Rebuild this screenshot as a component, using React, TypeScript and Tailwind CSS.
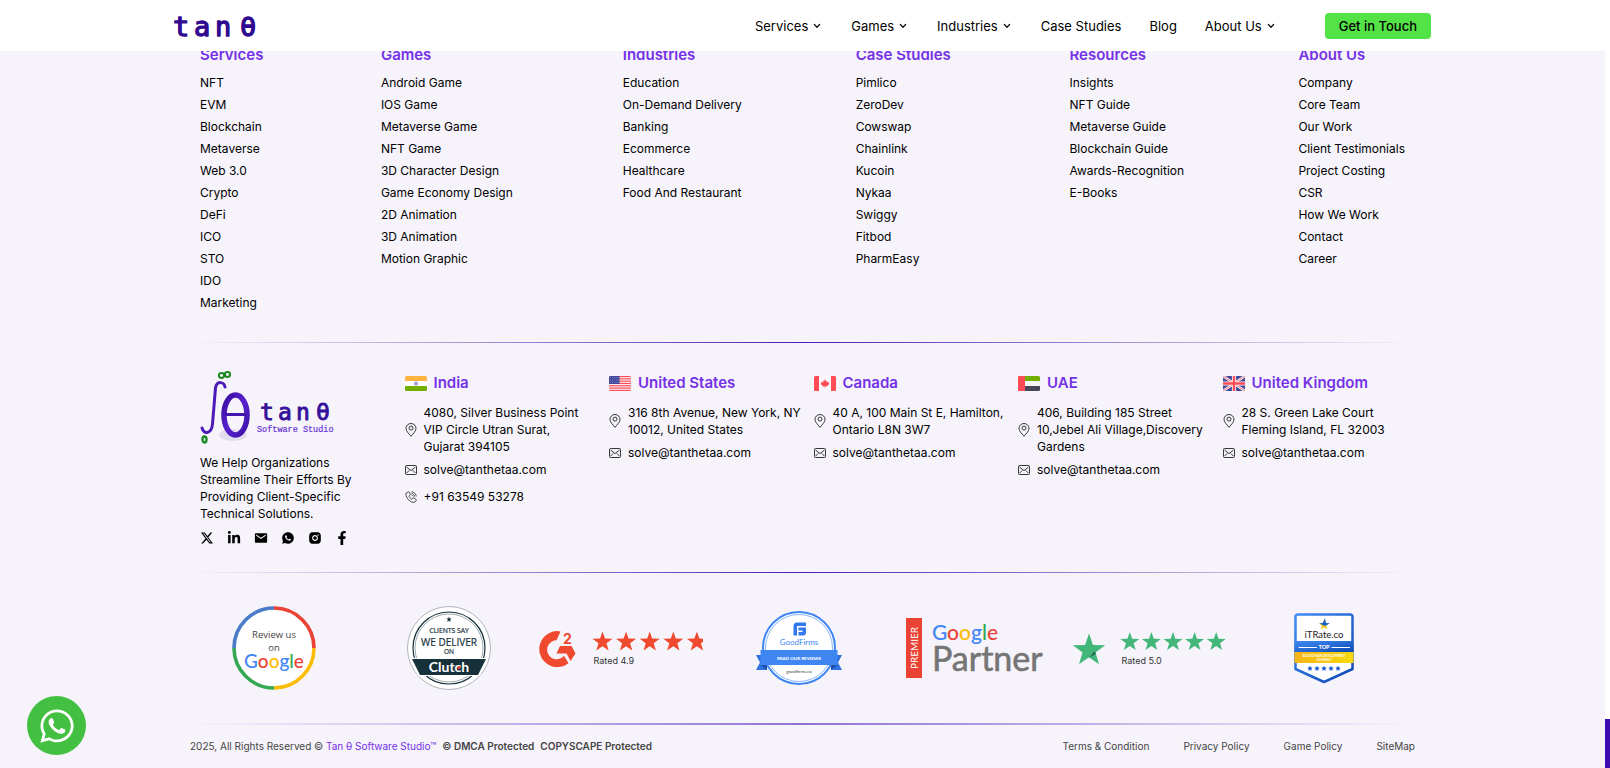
import type { ReactNode } from "react";
import { BsTwitterX } from "react-icons/bs";
import { FaFacebookF, FaLinkedinIn, FaWhatsapp } from "react-icons/fa";
import { IoMdMail } from "react-icons/io";
import { RiInstagramFill, RiWhatsappFill } from "react-icons/ri";

const navItems = [
  { label: "Services", menu: true },
  { label: "Games", menu: true },
  { label: "Industries", menu: true },
  { label: "Case Studies", menu: false },
  { label: "Blog", menu: false },
  { label: "About Us", menu: true },
];

const linkColumns = [
  {
    title: "Services",
    links: ["NFT", "EVM", "Blockchain", "Metaverse", "Web 3.0", "Crypto", "DeFi", "ICO", "STO", "IDO", "Marketing"],
  },
  {
    title: "Games",
    links: [
      "Android Game",
      "IOS Game",
      "Metaverse Game",
      "NFT Game",
      "3D Character Design",
      "Game Economy Design",
      "2D Animation",
      "3D Animation",
      "Motion Graphic",
    ],
  },
  {
    title: "Industries",
    links: ["Education", "On-Demand Delivery", "Banking", "Ecommerce", "Healthcare", "Food And Restaurant"],
  },
  {
    title: "Case Studies",
    links: ["Pimlico", "ZeroDev", "Cowswap", "Chainlink", "Kucoin", "Nykaa", "Swiggy", "Fitbod", "PharmEasy"],
  },
  {
    title: "Resources",
    links: ["Insights", "NFT Guide", "Metaverse Guide", "Blockchain Guide", "Awards-Recognition", "E-Books"],
  },
  {
    title: "About Us",
    links: [
      "Company",
      "Core Team",
      "Our Work",
      "Client Testimonials",
      "Project Costing",
      "CSR",
      "How We Work",
      "Contact",
      "Career",
    ],
  },
];

function starPoints(cx: number, cy: number, r: number, inner = 0.4) {
  return Array.from({ length: 10 }, (_, i) => {
    const radius = i % 2 === 0 ? r : r * inner;
    const angle = (Math.PI / 5) * i - Math.PI / 2;
    return `${(cx + radius * Math.cos(angle)).toFixed(2)},${(cy + radius * Math.sin(angle)).toFixed(2)}`;
  }).join(" ");
}

function ChevronIcon() {
  return (
    <svg viewBox="0 0 12 6" className="h-[6px] w-3" fill="none" stroke="#111" strokeWidth="1.3" strokeLinecap="round" aria-hidden="true">
      <path d="M3.400 1.500 6 4.200 8.600 1.500" />
    </svg>
  );
}

function PinIcon() {
  return (
    <svg viewBox="0 0 12 14" className="h-[14px] w-3 shrink-0" fill="none" stroke="#222" strokeWidth="0.9" aria-hidden="true">
      <path d="M6 13.3C3.8 10.6 1 8.100 1 5.400a5 4.900 0 0 1 10 0C11 8.100 8.200 10.600 6 13.300Z" />
      <circle cx="6" cy="5.100" r="2" />
    </svg>
  );
}

function EnvelopeIcon() {
  return (
    <svg viewBox="0 0 12 10" className="h-[10px] w-3 shrink-0" fill="none" stroke="#222" strokeWidth="0.9" aria-hidden="true">
      <rect x="0.500" y="0.500" width="11" height="9" rx="1" />
      <path d="M1.500 2 6 5.600 10.500 2M1.500 8.200 4.200 5.400M10.500 8.200 7.800 5.400" />
    </svg>
  );
}

function PhoneIcon() {
  return (
    <svg viewBox="0 0 24 24" className="h-3 w-3 shrink-0" fill="none" stroke="#222" strokeWidth="1.600" aria-hidden="true">
      <path d="M6.500 1.800 2.500 4C.5 6 2 12 6.500 17s10.500 7 13.500 5l2.500-3c.6-1 .2-1.800-.6-2.400l-4-2.600c-.9-.5-1.700-.3-2.300.5l-1 1.400c-.5.6-1 .7-1.700.2-2-1.300-3.500-3-4.600-5-.4-.7-.3-1.200.3-1.700l1.300-1c.7-.6.9-1.300.5-2.100L8.600 2.400c-.5-.8-1.200-1.100-2.100-.6Z" />
      <path d="M13 1.500c5 .2 9.300 4.500 9.500 9.500M13 4.800c3.300.2 6 2.900 6.200 6.200M13 8c1.600.2 2.800 1.400 3 3" />
    </svg>
  );
}

function Flag({ clip, label, children }: { clip: string; label: string; children: ReactNode }) {
  return (
    <svg viewBox="0 0 22 15" className="h-[15px] w-[22px] shrink-0" role="img" aria-label={label}>
      <clipPath id={clip}>
        <rect width="22" height="15" rx="1.500" />
      </clipPath>
      <g clipPath={`url(#${clip})`}>{children}</g>
    </svg>
  );
}

const flags: Record<string, ReactNode> = {
  India: (
    <Flag clip="flag-in" label="Flag of India">
      <rect width="22" height="15" fill="#fff" />
      <rect width="22" height="5" fill="#ffb341" />
      <rect y="10" width="22" height="5" fill="#73af00" />
      <circle cx="11" cy="7.500" r="1.700" fill="#dcdcf0" stroke="#5b5b9e" strokeWidth="0.500" />
      <path d="M10 6.500 12 8.500M12 6.500 10 8.500" stroke="#41479b" strokeWidth="0.500" />
    </Flag>
  ),
  "United States": (
    <Flag clip="flag-us" label="Flag of the United States">
      <rect width="22" height="15" fill="#f6f0f4" />
      {[0, 1, 2, 3, 4, 5, 6].map((i) => (
        <rect key={i} y={i * 2.3} width="22" height="1.150" fill="#ff4b55" />
      ))}
      <rect width="10.500" height="8" fill="#41479b" />
      {[1.6, 4, 6.4].map((y) =>
        [1.5, 3.4, 5.3, 7.2, 9.1].map((x) => <circle key={`${x}-${y}`} cx={x} cy={y} r="0.450" fill="#c9cbe8" />)
      )}
    </Flag>
  ),
  Canada: (
    <Flag clip="flag-ca" label="Flag of Canada">
      <rect width="22" height="15" fill="#f8f6fa" />
      <rect width="5" height="15" fill="#ff4b55" />
      <rect x="17" width="5" height="15" fill="#ff4b55" />
      <path
        d="M11 3.200l.9 1.700.9-.5-.3 2.200 1.200-1 .3.800 1.300-.2-.5 1.300.6.500-2.100 1.700.2.900-2.200-.3.050 1.500h-.7l.05-1.500-2.200.3.200-.9-2.100-1.700.6-.5-.5-1.300 1.300.2.300-.8 1.200 1-.3-2.200.9.500z"
        fill="#ff4b55"
      />
    </Flag>
  ),
  UAE: (
    <Flag clip="flag-ae" label="Flag of the UAE">
      <rect width="22" height="15" fill="#f5f5f5" />
      <rect width="22" height="5" fill="#73af00" />
      <rect y="10" width="22" height="5" fill="#464655" />
      <rect width="7" height="15" fill="#ff4b55" />
    </Flag>
  ),
  "United Kingdom": (
    <Flag clip="flag-gb" label="Flag of the United Kingdom">
      <rect width="22" height="15" fill="#41479b" />
      <path d="M0 0 22 15M22 0 0 15" stroke="#f5f5f5" strokeWidth="2.600" />
      <path d="M0 0 22 15M22 0 0 15" stroke="#ff4b55" strokeWidth="0.800" />
      <path d="M11 0V15M0 7.500H22" stroke="#f5f5f5" strokeWidth="4.200" />
      <path d="M11 0V15M0 7.500H22" stroke="#ff4b55" strokeWidth="2.400" />
    </Flag>
  ),
};

const offices = [
  {
    country: "India",
    address: ["4080, Silver Business Point", "VIP Circle Utran Surat,", "Gujarat 394105"],
    phone: "+91 63549 53278",
  },
  { country: "United States", address: ["316 8th Avenue, New York, NY", "10012, United States"] },
  { country: "Canada", address: ["40 A, 100 Main St E, Hamilton,", "Ontario L8N 3W7"] },
  { country: "UAE", address: ["406, Building 185 Street", "10,Jebel Ali Village,Discovery", "Gardens"] },
  { country: "United Kingdom", address: ["28 S. Green Lake Court", "Fleming Island, FL 32003"] },
];

const social = [
  { label: "X", icon: <BsTwitterX size={12} /> },
  { label: "LinkedIn", icon: <FaLinkedinIn size={14} /> },
  { label: "Email", icon: <IoMdMail size={14} /> },
  { label: "WhatsApp", icon: <RiWhatsappFill size={14} /> },
  { label: "Instagram", icon: <RiInstagramFill size={14} /> },
  { label: "Facebook", icon: <FaFacebookF size={14} /> },
];

function HeaderLogo() {
  return (
    <svg viewBox="0 0 86 40" className="h-10 w-[86px]" role="img" aria-label="tan θ">
      <g
        fill="#2f0a8f"
        stroke="#2f0a8f"
        strokeWidth="1.300"
        strokeLinejoin="round"
        fontFamily="'DejaVu Sans Mono', monospace"
        fontSize="27"
      >
        <text x="-1" y="30">t</text>
        <text x="20" y="30">a</text>
        <text x="41" y="30">n</text>
        <text x="66" y="30">θ</text>
      </g>
    </svg>
  );
}

function StudioLogo() {
  return (
    <svg viewBox="0 0 136 75" className="h-[75px] w-[136px]" role="img" aria-label="tan θ Software Studio">
      <defs>
        <linearGradient id="theta" x1="0" y1="0" x2="1" y2="1">
          <stop offset="0" stopColor="#3a0ca3" />
          <stop offset="0.500" stopColor="#5a22cc" />
          <stop offset="1" stopColor="#3d12a8" />
        </linearGradient>
      </defs>
      <ellipse cx="33" cy="64" rx="14" ry="6" fill="#e3deee" />
      <path
        d="M25 16C24 11 17 9 15.500 17L12.500 53C11.500 63 4 64 2 57"
        fill="none"
        stroke="#4a1bb8"
        strokeWidth="3"
        strokeLinecap="round"
      />
      <g fill="none" stroke="#1c8a22" strokeWidth="2">
        <ellipse cx="21.500" cy="4.500" rx="2.600" ry="2.400" />
        <ellipse cx="27.500" cy="3.500" rx="2.600" ry="2.400" />
        <ellipse cx="4.500" cy="68.500" rx="2" ry="3" strokeWidth="2.400" />
      </g>
      <ellipse cx="35.500" cy="44" rx="11.500" ry="20" fill="none" stroke="url(#theta)" strokeWidth="5.500" />
      <path d="M25 43.500H46" stroke="#4315b0" strokeWidth="3" />
      <g
        fill="#35109a"
        stroke="#35109a"
        strokeWidth="0.900"
        strokeLinejoin="round"
        fontFamily="'DejaVu Sans Mono', monospace"
        fontSize="23"
      >
        <text x="60" y="49">t</text>
        <text x="78" y="49">a</text>
        <text x="96" y="49">n</text>
        <text x="116" y="49">θ</text>
      </g>
      <text x="57" y="61" fill="#6a33d8" stroke="#6a33d8" strokeWidth="0.200" fontFamily="'Liberation Mono', monospace" fontSize="8.500">
        Software Studio
      </text>
    </svg>
  );
}

function GoogleWord({ x, y, size }: { x: number; y: number; size: number }) {
  return (
    <text x={x} y={y} textAnchor="middle" fontFamily="Lato, sans-serif" fontWeight="500" fontSize={size}>
      <tspan fill="#4285f4">G</tspan>
      <tspan fill="#ea4335">o</tspan>
      <tspan fill="#fbbc05">o</tspan>
      <tspan fill="#4285f4">g</tspan>
      <tspan fill="#34a853">l</tspan>
      <tspan fill="#ea4335">e</tspan>
    </text>
  );
}

function GoogleReviewBadge() {
  return (
    <svg viewBox="0 0 84 84" className="h-[84px] w-[84px]" role="img" aria-label="Review us on Google">
      <circle cx="42" cy="42" r="41" fill="#fff" />
      <g fill="none" strokeWidth="3.600">
        <path d="M42 2A40 40 0 0 1 82 42" stroke="#ea4335" />
        <path d="M82 42A40 40 0 0 1 42 82" stroke="#fbbc05" />
        <path d="M42 82A40 40 0 0 1 2 42" stroke="#34a853" />
        <path d="M2 42A40 40 0 0 1 42 2" stroke="#4a7cc9" />
      </g>
      <g fill="#444" textAnchor="middle" fontFamily="'Open Sans', sans-serif" fontSize="9.500">
        <text x="42" y="32">Review us</text>
        <text x="42" y="45">on</text>
      </g>
      <g strokeWidth="0.300">
        <GoogleWord x={42} y={62} size={19} />
      </g>
    </svg>
  );
}

function ClutchBadge() {
  return (
    <svg viewBox="0 0 84 84" className="h-[84px] w-[84px]" role="img" aria-label="Clients say we deliver on Clutch">
      <circle cx="42" cy="42" r="41.500" fill="#fff" stroke="#8d979c" strokeWidth="0.700" />
      <circle cx="42" cy="42" r="36" fill="none" stroke="#17313b" strokeWidth="1.200" />
      <circle cx="42" cy="42" r="34" fill="none" stroke="#17313b" strokeWidth="0.400" />
      <polygon points={starPoints(42, 13.5, 3)} fill="#17313b" />
      <path d="M4 52H80L73 70H11Z" fill="#fff" />
      <path d="M5 53H79L71 69H13Z" fill="#17313b" />
      <g fill="#17313b" stroke="#17313b" strokeWidth="0.200" textAnchor="middle" fontFamily="'Open Sans', sans-serif">
        <text x="42" y="27" fontSize="6.800">CLIENTS SAY</text>
        <text x="42" y="39.500" fontSize="10">WE DELIVER</text>
        <text x="42" y="48" fontSize="6.500">ON</text>
      </g>
      <text x="42" y="66" fill="#fff" textAnchor="middle" fontFamily="Lato, sans-serif" fontWeight="700" fontSize="14">
        Clutch
      </text>
      <circle cx="52" cy="61.500" r="1.500" fill="#ef4335" />
    </svg>
  );
}

function G2Badge() {
  return (
    <div className="flex items-center gap-4 pr-[6px] pt-[2px]">
      <svg viewBox="0 0 37 37" className="h-[37px] w-[37px]" role="img" aria-label="G2">
        <path d="M21.500.4A18 18 0 1 0 29.500 32.200L25 24.700A9.500 9.500 0 1 1 17.500 9.200Z" fill="#ef492f" />
        <path d="M21 15H32.500L36.500 22.500 31.500 30 27.500 22.500H17.500Z" fill="#ef492f" />
        <text x="24" y="12.500" fill="#ef492f" fontFamily="Inter, sans-serif" fontWeight="700" fontSize="14">
          2
        </text>
      </svg>
      <div className="flex flex-col gap-1">
        <svg viewBox="0 0 111 20" className="h-5 w-[111px]" role="img" aria-label="4.9 stars">
          {[0, 1, 2, 3, 4].map((i) => (
            <polygon key={i} points={starPoints(10.5 + i * 23.6, 11, 10.5)} fill="#ef492f" />
          ))}
        </svg>
        <span className="pl-[2px] text-[9px] leading-3 text-[#333]">Rated 4.9</span>
      </div>
    </div>
  );
}

function GoodFirmsBadge() {
  return (
    <svg viewBox="0 0 88 76" className="h-[76px] w-[88px]" role="img" aria-label="GoodFirms, read our reviews">
      <path d="M1 45H12V60H1L5 52.500ZM87 45H76V60H87L83 52.500Z" fill="#2f72dd" />
      <path d="M5.500 55 12 60V55ZM82.500 55 76 60V55Z" fill="#1d4fa8" />
      <circle cx="44" cy="38" r="36" fill="#fff" stroke="#3f86f3" strokeWidth="2" />
      <circle cx="44" cy="38" r="33.500" fill="none" stroke="#3f86f3" strokeWidth="0.600" />
      <rect x="5.500" y="40" width="77" height="15" fill="#3f86f3" />
      <path d="M51 12.500H42Q38.500 12.500 38.500 16V25.500H42V16H51ZM51 17.500H43.500V20.500H47.500V22H43.500V25.500H48Q51 25.500 51 22.500Z" fill="#3178ec" />
      <g textAnchor="middle">
        <text x="44" y="35" fill="#3f86f3" fontFamily="Lato, sans-serif" fontSize="8">GoodFirms</text>
        <text x="44" y="49.500" fill="#fff" fontFamily="Lato, sans-serif" fontWeight="900" fontSize="4.500">READ OUR REVIEWS</text>
        <text x="44" y="63" fill="#444" fontFamily="Lato, sans-serif" fontSize="4.500">goodfirms.co</text>
      </g>
    </svg>
  );
}

function GooglePartnerBadge() {
  return (
    <svg viewBox="0 0 138 62" className="h-[62px] w-[138px]" role="img" aria-label="Google Partner Premier">
      <rect x="1" y="1" width="16" height="60" fill="#ea4335" />
      <text transform="translate(12.500 31) rotate(-90)" textAnchor="middle" fill="#fff" fontFamily="Lato, sans-serif" fontSize="10">
        PREMIER
      </text>
      <GoogleWord x={60} y={23} size={21} />
      <text x="27" y="54" fill="#757575" stroke="#757575" strokeWidth="0.600" fontFamily="Lato, sans-serif" fontSize="34">
        Partner
      </text>
    </svg>
  );
}

function TrustBadge() {
  return (
    <div className="flex items-center gap-[14px] pt-[2px]">
      <svg viewBox="0 0 34 32" className="h-8 w-[34px]" role="img" aria-label="Trustpilot">
        <polygon points={starPoints(17, 17.5, 17)} fill="#43b77a" />
        <path d="M17 25 23.800 20.500 22.500 18.500Z" fill="#1f5c46" />
      </svg>
      <div className="flex flex-col gap-1">
        <svg viewBox="0 0 106 19" className="h-[19px] w-[106px]" role="img" aria-label="5.0 stars">
          {[0, 1, 2, 3, 4].map((i) => (
            <polygon key={i} points={starPoints(9.8 + i * 21.6, 10, 10)} fill="#43b77a" />
          ))}
        </svg>
        <span className="pl-[2px] text-[9px] leading-3 text-[#333]">Rated 5.0</span>
      </div>
    </div>
  );
}

function ITRateBadge() {
  return (
    <svg viewBox="0 0 60 71" className="h-[71px] w-[60px]" role="img" aria-label="iTRate.co top company">
      <defs>
        <linearGradient id="shield" x1="0" y1="0" x2="1" y2="1">
          <stop offset="0" stopColor="#3f8cf5" />
          <stop offset="1" stopColor="#0d47b5" />
        </linearGradient>
        <linearGradient id="gold" x1="0" y1="0" x2="1" y2="0">
          <stop offset="0" stopColor="#f5b516" />
          <stop offset="1" stopColor="#f7d90f" />
        </linearGradient>
      </defs>
      <path d="M4 1.500H56Q58.500 1.500 58.500 4V56L30 69 1.500 56V4Q1.500 1.500 4 1.500Z" fill="#fff" stroke="url(#shield)" strokeWidth="2.500" strokeLinejoin="round" />
      <rect x="0.500" y="28" width="59" height="11" fill="url(#shield)" />
      <rect x="0.500" y="39" width="59" height="11" fill="url(#gold)" />
      <polygon points={starPoints(30, 12, 5.5)} fill="#f5c518" />
      <path d="M31 5 32 10 36 10.300 31 13 25.500 10.500 29 9.800Z" fill="#1f62cf" />
      <path d="M4.500 34.500H23M37.500 34.500H56" stroke="#fff" strokeWidth="1" />
      <g textAnchor="middle" fontFamily="Lato, sans-serif">
        <text x="30" y="24.500" fill="#222" fontSize="9.500">iTRate.co</text>
        <text x="30" y="36" fill="#fff" fontSize="5.500" fontWeight="900">TOP</text>
        <text x="30" y="43.500" fill="#fff" fontSize="3" fontWeight="700">BLOCKCHAIN DEVELOPMENT</text>
        <text x="30" y="47.500" fill="#fff" fontSize="3" fontWeight="700">COMPANY</text>
      </g>
      {[16, 23, 30, 37, 44].map((x) => (
        <polygon key={x} points={starPoints(x, 55.5, 2.8, 0.5)} fill="#1f62cf" />
      ))}
    </svg>
  );
}

function Divider({ thick = false }: { thick?: boolean }) {
  return (
    <div className="px-4">
      <div
        className={
          thick
            ? "h-[2px] bg-linear-to-r from-transparent via-[#8f74d6] to-transparent"
            : "h-px bg-linear-to-r from-transparent via-[#4a1fb0] to-transparent"
        }
      />
    </div>
  );
}

export default function App() {
  return (
    <div className="min-h-screen bg-white pr-[5px] font-['Inter',sans-serif] text-black">
      <header className="fixed inset-x-0 top-0 z-10 bg-white pr-[5px]">
        <div className="mx-auto flex h-[51px] max-w-[1257px] items-center justify-between">
          <a href="#home">
            <HeaderLogo />
          </a>
          <div className="flex items-center gap-12">
            <nav className="flex items-center gap-7 text-[13px] leading-5">
              {navItems.map((item) => (
                <a key={item.label} href="#nav" className="flex items-center gap-[3px]">
                  {item.label}
                  {item.menu && <ChevronIcon />}
                </a>
              ))}
            </nav>
            <button type="button" className="h-[26px] rounded bg-[#54e346] px-[14px] text-[13px] font-medium leading-5">
              Get in Touch
            </button>
          </div>
        </div>
      </header>

      <footer className="min-h-screen bg-[#f6f3fb]">
        <div className="mx-auto max-w-[1257px] pt-[45px]">
          <div className="grid grid-cols-[181fr_242fr_233fr_214fr_229fr_106fr] px-[26px]">
            {linkColumns.map((column) => (
              <section key={column.title}>
                <h2 className="text-[15px] font-semibold leading-5 text-[#7431e6]">{column.title}</h2>
                <ul className="mt-[7px] text-[12px] leading-[22px]">
                  {column.links.map((link) => (
                    <li key={link}>
                      <a href="#link" className="whitespace-nowrap">
                        {link}
                      </a>
                    </li>
                  ))}
                </ul>
              </section>
            ))}
          </div>

          <div className="mt-7">
            <Divider />
          </div>

          <div className="mt-7 grid grid-cols-6 gap-[22px] px-[26px]">
            <div>
              <StudioLogo />
              <p className="mt-2 text-[12px] leading-[17px]">
                We Help Organizations
                <br />
                Streamline Their Efforts By
                <br />
                Providing Client-Specific
                <br />
                Technical Solutions.
              </p>
              <div className="mt-[9px] flex gap-[13px]">
                {social.map((s) => (
                  <a key={s.label} href="#social" aria-label={s.label} className="flex h-[14px] w-[14px] items-center justify-center">
                    {s.icon}
                  </a>
                ))}
              </div>
            </div>
            {offices.map((office) => (
              <section key={office.country} className="pt-[2px]">
                <h2 className="flex items-center gap-[7px] text-[15px] font-semibold leading-5 text-[#7431e6]">
                  {flags[office.country]}
                  {office.country}
                </h2>
                <div className="mt-[11px] flex items-center gap-[7px] text-[12px] leading-[17px]">
                  <PinIcon />
                  <address className="not-italic whitespace-nowrap">
                    {office.address.map((line) => (
                      <span key={line} className="block">
                        {line}
                      </span>
                    ))}
                  </address>
                </div>
                <a href="mailto:solve@tanthetaa.com" className="mt-[6px] flex items-center gap-[7px] text-[12px] leading-[17px]">
                  <EnvelopeIcon />
                  solve@tanthetaa.com
                </a>
                {office.phone && (
                  <a href="tel:+916354953278" className="mt-[10px] flex items-center gap-[7px] text-[12px] leading-[17px]">
                    <PhoneIcon />
                    {office.phone}
                  </a>
                )}
              </section>
            ))}
          </div>

          <div className="mt-[27px]">
            <Divider />
          </div>

          <div className="mt-[33px] grid grid-cols-7 items-center justify-items-center pl-3 pr-5">
            <GoogleReviewBadge />
            <ClutchBadge />
            <G2Badge />
            <GoodFirmsBadge />
            <GooglePartnerBadge />
            <TrustBadge />
            <ITRateBadge />
          </div>

          <div className="mt-[33px]">
            <Divider thick />
          </div>

          <div className="flex items-center justify-between px-4 pb-3 pt-[13px] text-[10px] leading-4 text-[#444]">
            <p className="flex gap-[6px]">
              <span>
                2025, All Rights Reserved © <a href="#home" className="text-[#7431e6]">Tan θ Software Studio™</a>
              </span>
              <strong className="font-semibold">© DMCA Protected</strong>
              <strong className="font-semibold">COPYSCAPE Protected</strong>
            </p>
            <div className="flex gap-[34px]">
              <a href="#terms">Terms &amp; Condition</a>
              <a href="#privacy">Privacy Policy</a>
              <a href="#games">Game Policy</a>
              <a href="#sitemap">SiteMap</a>
            </div>
          </div>
        </div>
      </footer>

      <a
        href="#whatsapp"
        aria-label="Chat on WhatsApp"
        className="fixed bottom-[13px] left-[27px] flex h-[59px] w-[59px] items-center justify-center rounded-full bg-[#43c041] text-white"
      >
        <FaWhatsapp size={38} />
      </a>
      <div className="fixed bottom-0 right-0 h-[49px] w-[5px] bg-[#3f0cb0]" />
    </div>
  );
}
